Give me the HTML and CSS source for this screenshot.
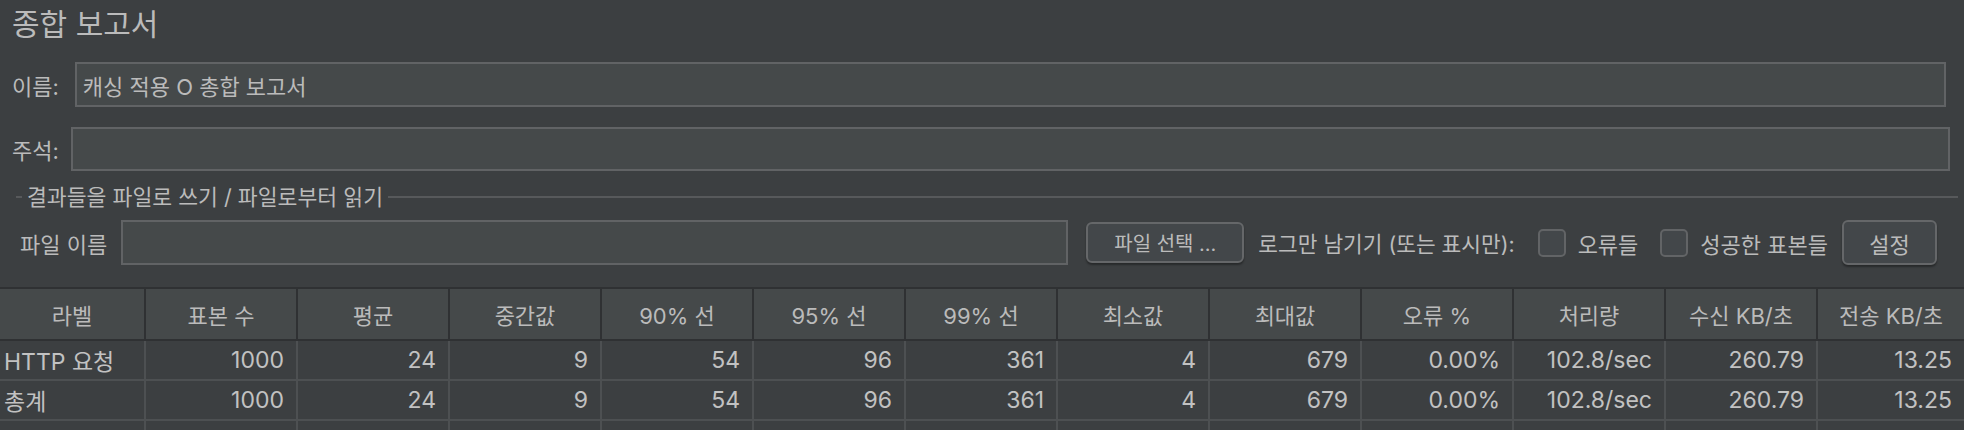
FILE: index.html
```html
<!DOCTYPE html>
<html lang="ko">
<head>
<meta charset="utf-8">
<title>종합 보고서</title>
<link rel="stylesheet" href="styles.css">
</head>
<body>
<div class="panel">
  <div class="title">종합 보고서</div>

  <div class="form-row row-name">
    <span class="label">이름:</span>
    <div class="field field-name">캐싱 적용 O 총합 보고서</div>
  </div>

  <div class="form-row row-comment">
    <span class="label">주석:</span>
    <div class="field field-comment"></div>
  </div>

  <div class="group-title">
    <span class="dash"></span>
    <span class="group-text">결과들을 파일로 쓰기 / 파일로부터 읽기</span>
    <span class="rule"></span>
  </div>

  <div class="file-row">
    <span class="label file-label">파일 이름</span>
    <div class="field field-file"></div>
    <div class="btn btn-browse">파일 선택 ...</div>
    <span class="label log-label">로그만 남기기 (또는 표시만):</span>
    <span class="check"></span>
    <span class="label check-label">오류들</span>
    <span class="check check-2"></span>
    <span class="label check-label">성공한 표본들</span>
    <div class="btn btn-config">설정</div>
  </div>

  <table class="grid">
    <colgroup>
      <col class="c-first">
      <col class="c-mid"><col class="c-mid"><col class="c-mid"><col class="c-mid">
      <col class="c-mid"><col class="c-mid"><col class="c-mid"><col class="c-mid">
      <col class="c-mid"><col class="c-mid"><col class="c-mid">
      <col class="c-last">
    </colgroup>
    <thead>
      <tr>
        <th>라벨</th><th>표본 수</th><th>평균</th><th>중간값</th><th>90% 선</th><th>95% 선</th><th>99% 선</th><th>최소값</th><th>최대값</th><th>오류 %</th><th>처리량</th><th>수신 KB/초</th><th>전송 KB/초</th>
      </tr>
    </thead>
    <tbody>
      <tr>
        <td class="txt">HTTP 요청</td><td>1000</td><td>24</td><td>9</td><td>54</td><td>96</td><td>361</td><td>4</td><td>679</td><td>0.00%</td><td>102.8/sec</td><td>260.79</td><td>13.25</td>
      </tr>
      <tr>
        <td class="txt">총계</td><td>1000</td><td>24</td><td>9</td><td>54</td><td>96</td><td>361</td><td>4</td><td>679</td><td>0.00%</td><td>102.8/sec</td><td>260.79</td><td>13.25</td>
      </tr>
      <tr class="empty">
        <td></td><td></td><td></td><td></td><td></td><td></td><td></td><td></td><td></td><td></td><td></td><td></td><td></td>
      </tr>
    </tbody>
  </table>
</div>
</body>
</html>
```

FILE: styles.css
```css
html, body {
  margin: 0;
  padding: 0;
  background: #3c3f41;
  overflow: hidden;
}

body {
  font-family: Inter, "Noto Sans CJK KR", sans-serif;
  color: #bbbbbb;
  width: 1964px;
  height: 430px;
}

.panel {
  display: flex;
  flex-direction: column;
  height: 430px;
  overflow: hidden;
}

.title {
  height: 48px;
  line-height: 48px;
  font-size: 30px;
  padding-left: 12px;
}

.form-row {
  display: flex;
  align-items: center;
  padding-left: 12px;
}

.label {
  font-size: 22px;
  white-space: nowrap;
}

.field {
  box-sizing: border-box;
  background: #45494a;
  border: 2px solid #616365;
  font-size: 22px;
  display: flex;
  align-items: center;
  padding-left: 6px;
  color: #bbbbbb;
}

.row-name {
  margin-top: 14px;
  height: 45px;
  padding-right: 18px;
}

.field-name {
  flex: 1;
  height: 45px;
  margin-left: 16px;
}

.row-comment {
  margin-top: 20px;
  height: 44px;
  padding-right: 14px;
}

.field-comment {
  flex: 1;
  height: 44px;
  margin-left: 12px;
}

.group-title {
  margin-top: 15px;
  height: 22px;
  display: flex;
  align-items: center;
  padding-left: 16px;
  padding-right: 6px;
}

.dash {
  width: 6px;
  height: 2px;
  background: #57595b;
}

.group-text {
  font-size: 21.6px;
  line-height: 22px;
  margin-left: 5px;
  margin-right: 5px;
  white-space: nowrap;
}

.rule {
  flex: 1;
  height: 2px;
  background: #57595b;
}

.file-row {
  margin-top: 12px;
  height: 45px;
  display: flex;
  align-items: center;
  padding-left: 20px;
  padding-right: 27px;
}

.field-file {
  flex: 1;
  height: 45px;
  margin-left: 14px;
}

.btn {
  box-sizing: border-box;
  display: flex;
  align-items: center;
  justify-content: center;
  background: #43474a;
  border: 2px solid #656769;
  border-radius: 6px;
  box-shadow: 0 2px 2px rgba(0, 0, 0, 0.35);
  color: #bbbbbb;
  white-space: nowrap;
}

.btn-browse {
  width: 158px;
  height: 41px;
  margin-left: 18px;
  font-size: 20px;
}

.log-label {
  margin-left: 14px;
  font-size: 21.4px;
}

.check {
  box-sizing: border-box;
  width: 28px;
  height: 28px;
  border: 2px solid #626466;
  border-radius: 5px;
  background: #43474a;
  margin-left: 23px;
  flex: none;
}

.check-2 {
  margin-left: 22px;
}

.check-label {
  margin-left: 12px;
}

.btn-config {
  width: 95px;
  height: 45px;
  margin-left: 14px;
  font-size: 22px;
}

.grid {
  margin-top: 22px;
  border-collapse: collapse;
  table-layout: fixed;
  width: 1964px;
  font-size: 22px;
  flex: none;
}

.c-first { width: 145px; }
.c-mid { width: 152px; }
.c-last { width: 147px; }

.grid th {
  height: 50px;
  padding: 0;
  font-weight: normal;
  text-align: center;
  background: #45494a;
  color: #bbbbbb;
  border-top: 2px solid #2f3133;
  border-bottom: 2px solid #2f3133;
  border-right: 2px solid #2f3133;
  white-space: nowrap;
  overflow: hidden;
}

.grid th:last-child {
  border-right: none;
}

.grid td {
  height: 38px;
  padding: 0 12px 0 4px;
  text-align: right;
  background: #3c3f41;
  color: #c2c2c2;
  font-size: 23px;
  border-bottom: 2px solid #4d5052;
  border-right: 2px solid #4d5052;
  white-space: nowrap;
  overflow: hidden;
}

.grid td:last-child {
  border-right: none;
}

.grid td.txt {
  text-align: left;
  padding-left: 4px;
}
```
